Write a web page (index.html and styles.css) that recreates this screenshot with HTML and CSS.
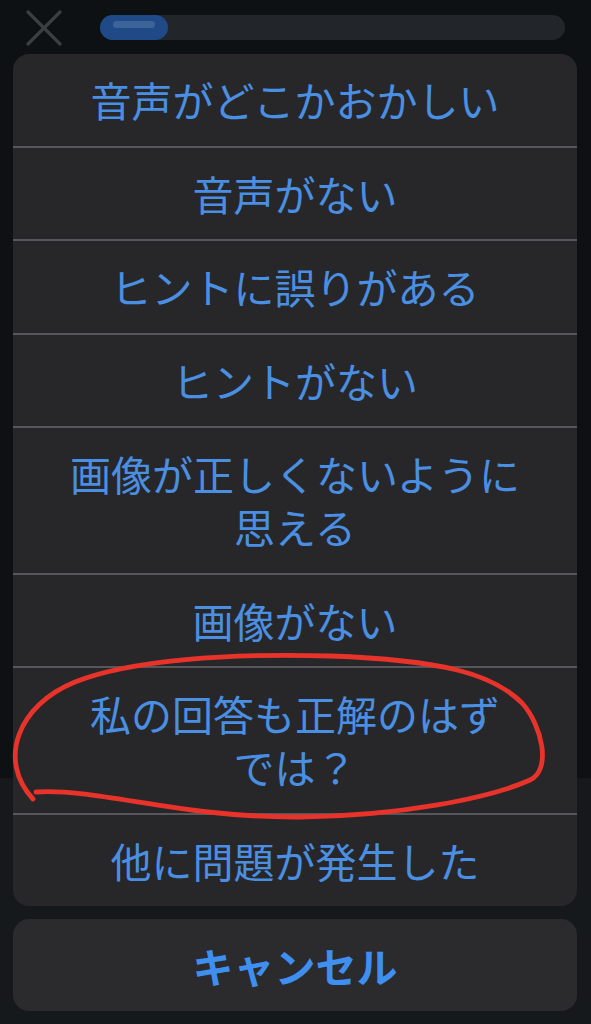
FILE: index.html
```html
<!DOCTYPE html>
<html lang="ja">
<head>
    <meta charset="UTF-8">
    <meta name="viewport" content="width=device-width, initial-scale=1.0">
    <title>問題を報告</title>
    <link rel="stylesheet" href="styles.css">
</head>
<body>
    <div class="screen">
        <div class="topbar">
            <svg class="close-icon" width="36" height="36" viewBox="0 0 36 36">
                <path d="M2 2 L34 34 M34 2 L2 34" stroke="#3a3f43" stroke-width="3.2" stroke-linecap="round" fill="none"/>
            </svg>
            <div class="progress">
                <div class="progress-fill"><span class="progress-shine"></span></div>
            </div>
        </div>

        <div class="sheet">
            <div class="action">音声がどこかおかしい</div>
            <div class="action">音声がない</div>
            <div class="action">ヒントに誤りがある</div>
            <div class="action">ヒントがない</div>
            <div class="action">画像が正しくないように<br>思える</div>
            <div class="action">画像がない</div>
            <div class="action">私の回答も正解のはず<br>では？</div>
            <div class="action">他に問題が発生した</div>
        </div>

        <div class="cancel">キャンセル</div>

        <!-- 手書きの赤い丸 -->
        <svg class="scribble" width="591" height="1024" viewBox="0 0 591 1024">
            <path d="M36 792 C 100 788, 180 818, 300 817 C 400 816, 490 798, 530 780 C 552 770, 542 725, 522 703 C 492 673, 440 660, 330 656 C 230 653, 130 660, 75 682 C 18 705, -3 760, 33 799"
                  stroke="#e8332b" stroke-width="4.8" stroke-linecap="round" stroke-linejoin="round" fill="none"/>
        </svg>
    </div>
</body>
</html>
```

FILE: styles.css
```css
body {
    margin: 0;
    padding: 0;
    background-color: #0d1114;
    font-family: "Noto Sans CJK JP", "Noto Sans", sans-serif;
}
.screen {
    position: relative;
    width: 591px;
    height: 1024px;
    overflow: hidden;
    background: linear-gradient(to bottom, #0d1114 0, #0d1114 778px, #15191c 778px);
}
.topbar {
    display: flex;
    align-items: flex-start;
    height: 54px;
}
.close-icon {
    margin: 10px 0 0 26px;
}
.progress {
    margin: 15px 0 0 38px;
    width: 465px;
    height: 25px;
    border-radius: 13px;
    background-color: #22262a;
}
.progress-fill {
    width: 68px;
    height: 25px;
    border-radius: 13px;
    background-color: #1f4a87;
    padding: 6px 0 0 13px;
    box-sizing: border-box;
}
.progress-shine {
    display: block;
    width: 42px;
    height: 7px;
    border-radius: 4px;
    background-color: #3d6498;
}
.sheet {
    margin: 0 14px 0 13px;
    background-color: #272729;
    border-radius: 16px;
    overflow: hidden;
}
.action {
    padding: 19.25px 10px;
    line-height: 53px;
    font-size: 41px;
    color: #4a8fe2;
    text-align: center;
    border-top: 2px solid #57575b;
}
.action:first-child {
    border-top: none;
}
.cancel {
    margin: 13px 14px 0 13px;
    height: 92px;
    line-height: 92px;
    border-radius: 16px;
    background-color: #2b2b2e;
    color: #3f8ff0;
    font-size: 41px;
    font-weight: 700;
    text-align: center;
}
.scribble {
    position: absolute;
    top: 0;
    left: 0;
    pointer-events: none;
}
```
